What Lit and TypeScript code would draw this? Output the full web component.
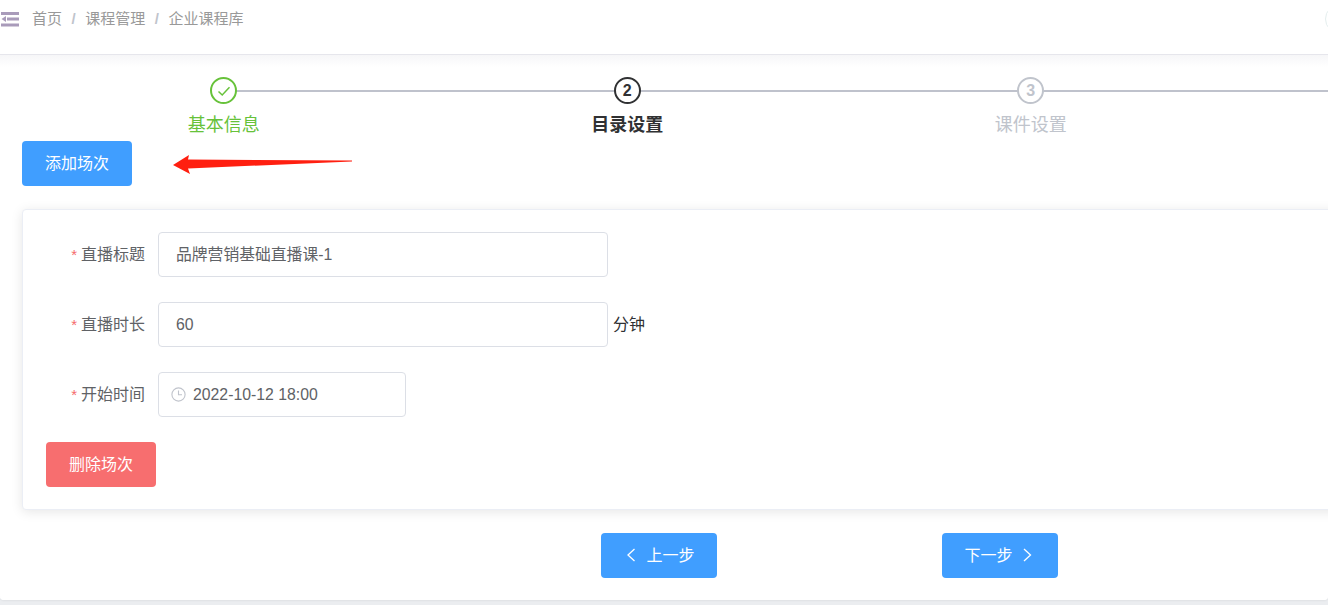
import { LitElement, html, css } from "lit";
import { customElement } from "lit/decorators.js";

@customElement("app-root")
export class AppRoot extends LitElement {
  static styles = css`
    :host {
      display: block;
      width: 1328px;
      height: 605px;
      overflow: hidden;
      position: relative;
      background: #ebedf0;
      font-family: "Liberation Sans", "Noto Sans CJK SC", sans-serif;
      color: #606266;
    }
    * { box-sizing: border-box; }
    .page { width: 1328px; height: 600px; background: #fff; display: flex; flex-direction: column; overflow: hidden; border-radius: 0 0 4px 4px; box-shadow: 0 1px 2px rgba(0,0,0,.05); }
    .header {
      flex: none; height: 55px; border-bottom: 1px solid #e6e6ec;
      display: flex; align-items: flex-start; position: relative;
      padding-top: 11px;
    }
    .burger { width: 19px; height: 16px; margin: 0 12px 0 1px; flex: none; }
    .crumbs { display: flex; font-size: 15px; line-height: 16px; color: #999; }
    .crumbs .sep { margin: 0 9.5px; color: #c0c4cc; font-weight: 700; }
    .avatar {
      position: absolute; left: 1325px; top: 4px; width: 30px; height: 30px;
      border: 1px solid #e4eeee; border-radius: 50%;
    }
    .main {
      flex: 1; min-height: 0; padding: 22px 0 0 22px; width: 1636px;
      background: linear-gradient(#f6f6f8, #fff 12px);
      display: flex; flex-direction: column; align-items: flex-start; position: relative;
    }
    .steps { display: flex; flex: none; height: 64px; }
    .step { width: 403.5px; display: flex; flex-direction: column; align-items: center; position: relative; }
    .step::after {
      content: ""; position: absolute; left: 201.75px; width: 403.5px; top: 13px; height: 2px; background: #bfc2cc;
    }
    .icon {
      flex: none;
      width: 27px; height: 27px; border-radius: 50%; border: 2px solid #c0c4cc; background: #fff;
      display: flex; align-items: center; justify-content: center;
      font-size: 16px; font-weight: 700; color: #c0c4cc; position: relative; z-index: 1;
    }
    .title { flex: none; font-size: 18px; line-height: 38px; margin-top: 2px; color: #c0c4cc; white-space: nowrap; }
    .step.done .icon { border-color: #67c23a; color: #67c23a; }
    .step.done .title { color: #67c23a; }
    .step.cur .icon { border-color: #303133; color: #303133; }
    .step.cur .title { color: #303133; font-weight: 700; }
    .btn {
      width: 110px; height: 45px; border-radius: 4px; background: #409eff; color: #fff;
      display: flex; align-items: center; justify-content: center; font-size: 16px; line-height: 20px; flex: none;
    }
    .btn.del { background: #f76e6f; margin: 0 0 0 23px; }
    .card {
      margin-top: 23px; width: 1592px; height: 301px; flex: none; background: #fff;
      border: 1px solid #ebeef5; border-radius: 4px; box-shadow: 0 2px 12px rgba(0,0,0,.1);
      padding: 22px 0 0 0; display: flex; flex-direction: column; align-items: flex-start;
    }
    .row { display: flex; align-items: center; height: 45px; margin-bottom: 25px; }
    .label { width: 122px; text-align: right; font-size: 16px; line-height: 20px; color: #606266; flex: none; margin-right: 13px; }
    .req { color: #f56c6c; margin-right: 4px; font-size: 15px; }
    .input {
      width: 450px; height: 45px; border: 1px solid #dcdfe6; border-radius: 4px; background: #fff;
      display: flex; align-items: center; padding: 0 0 0 17px; font-size: 15.8px; line-height: 20px; color: #606266; flex: none;
    }
    .input.date { width: 248px; padding-left: 12px; }
    .clock { width: 15px; height: 15px; margin: 0 7px 0 0; flex: none; }
    .unit { font-size: 16px; line-height: 20px; color: #303133; margin-left: 5px; }
    .nav { display: flex; margin: 23px 0 0 579px; gap: 225px; }
    .btn.nav-btn { width: 116px; gap: 7px; }
    .chev { width: 16px; height: 14px; flex: none; margin-top: -1px; }
    .arrow { position: absolute; left: 170px; top: 150px; width: 190px; height: 30px; }
  `;

  render() {
    return html`
      <div class="page">
        <div class="header">
          <svg class="burger" viewBox="0 0 19 16" fill="#a99bba">
            <rect x="0" y="1" width="18" height="3"></rect>
            <rect x="6" y="6.5" width="12" height="3"></rect>
            <path d="M0.5 8 L5 5 V11 Z"></path>
            <rect x="0" y="12.5" width="18" height="3"></rect>
          </svg>
          <div class="crumbs">
            <span>首页</span><span class="sep">/</span>
            <span>课程管理</span><span class="sep">/</span>
            <span>企业课程库</span>
          </div>
          <div class="avatar"></div>
        </div>
        <div class="main">
          <div class="steps">
            <div class="step done">
              <div class="icon">
                <svg width="16" height="16" viewBox="0 0 16 16" fill="none" stroke="#67c23a" stroke-width="1.5"><path d="M2.5 8.5 L6.2 12 L13.5 4.2"></path></svg>
              </div>
              <div class="title">基本信息</div>
            </div>
            <div class="step cur"><div class="icon">2</div><div class="title">目录设置</div></div>
            <div class="step"><div class="icon">3</div><div class="title">课件设置</div></div>
          </div>
          <div class="btn add">添加场次</div>
          <div class="card">
            <div class="row">
              <div class="label"><span class="req">*</span>直播标题</div>
              <div class="input">品牌营销基础直播课-1</div>
            </div>
            <div class="row">
              <div class="label"><span class="req">*</span>直播时长</div>
              <div class="input">60</div>
              <div class="unit">分钟</div>
            </div>
            <div class="row">
              <div class="label"><span class="req">*</span>开始时间</div>
              <div class="input date">
                <svg class="clock" viewBox="0 0 15 15" fill="none" stroke="#c0c4cc" stroke-width="1.1">
                  <circle cx="7.5" cy="7.5" r="6.6"></circle>
                  <path d="M7.5 3.6 V7.8 H11"></path>
                </svg>
                2022-10-12 18:00
              </div>
            </div>
            <div class="btn del">删除场次</div>
          </div>
          <div class="nav">
            <div class="btn nav-btn">
              <svg class="chev" viewBox="0 0 16 14" fill="none" stroke="#fff" stroke-width="1.3"><path d="M11.5 1 L5 7 L11.5 13"></path></svg>
              上一步
            </div>
            <div class="btn nav-btn">
              下一步
              <svg class="chev" viewBox="0 0 16 14" fill="none" stroke="#fff" stroke-width="1.3"><path d="M4 1 L10.5 7 L4 13"></path></svg>
            </div>
          </div>
        </div>
      </div>
      <svg class="arrow" viewBox="170 150 190 30">
        <polygon fill="#ff1f10" points="173,165 189,155 188,159.5 352,160.5 352,161.5 188,168.5 190,174"></polygon>
      </svg>
    `;
  }
}
